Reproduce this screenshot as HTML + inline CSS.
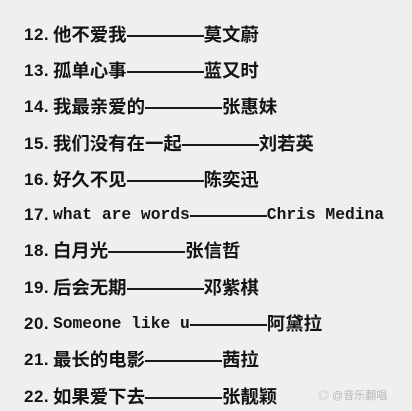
<!DOCTYPE html>
<html><head><meta charset="utf-8"><style>
html,body{margin:0;padding:0}
body{width:412px;height:411px;background:#efefef;position:relative;overflow:hidden;font-family:"Liberation Sans","Noto Sans CJK SC",sans-serif;color:#141414}
.r{position:absolute;left:0;height:24px;line-height:24px;white-space:nowrap}
.n{position:absolute;left:24px;font-size:17px;font-weight:bold;letter-spacing:0.5px}
.c{position:absolute;left:53px;font-size:18.4px;font-weight:bold;display:flex;align-items:center}
.m{font-family:"Liberation Mono",monospace;font-size:16.3px;font-weight:bold}
.d{display:inline-block;width:77px;height:2px;background:#1a1a1a;margin-top:1px}
.w{position:absolute;left:318px;top:387px;font-size:11px;color:#b8b8b8}
</style></head><body>
<div class="r" style="top:23px"><span class="n">12.</span><span class="c">他不爱我<i class="d"></i>莫文蔚</span></div>
<div class="r" style="top:59px"><span class="n">13.</span><span class="c">孤单心事<i class="d"></i>蓝又时</span></div>
<div class="r" style="top:95px"><span class="n">14.</span><span class="c">我最亲爱的<i class="d"></i>张惠妹</span></div>
<div class="r" style="top:132px"><span class="n">15.</span><span class="c">我们没有在一起<i class="d"></i>刘若英</span></div>
<div class="r" style="top:168px"><span class="n">16.</span><span class="c">好久不见<i class="d"></i>陈奕迅</span></div>
<div class="r" style="top:203px"><span class="n">17.</span><span class="c"><span class="m">what are words</span><i class="d"></i><span class="m">Chris Medina</span></span></div>
<div class="r" style="top:239px"><span class="n">18.</span><span class="c">白月光<i class="d"></i>张信哲</span></div>
<div class="r" style="top:276px"><span class="n">19.</span><span class="c">后会无期<i class="d"></i>邓紫棋</span></div>
<div class="r" style="top:312px"><span class="n">20.</span><span class="c"><span class="m">Someone like u</span><i class="d"></i>阿黛拉</span></div>
<div class="r" style="top:348px"><span class="n">21.</span><span class="c">最长的电影<i class="d"></i>茜拉</span></div>
<div class="r" style="top:385px"><span class="n">22.</span><span class="c">如果爱下去<i class="d"></i>张靓颖</span></div>
<div class="w">◎ @音乐翻唱</div>
</body></html>
